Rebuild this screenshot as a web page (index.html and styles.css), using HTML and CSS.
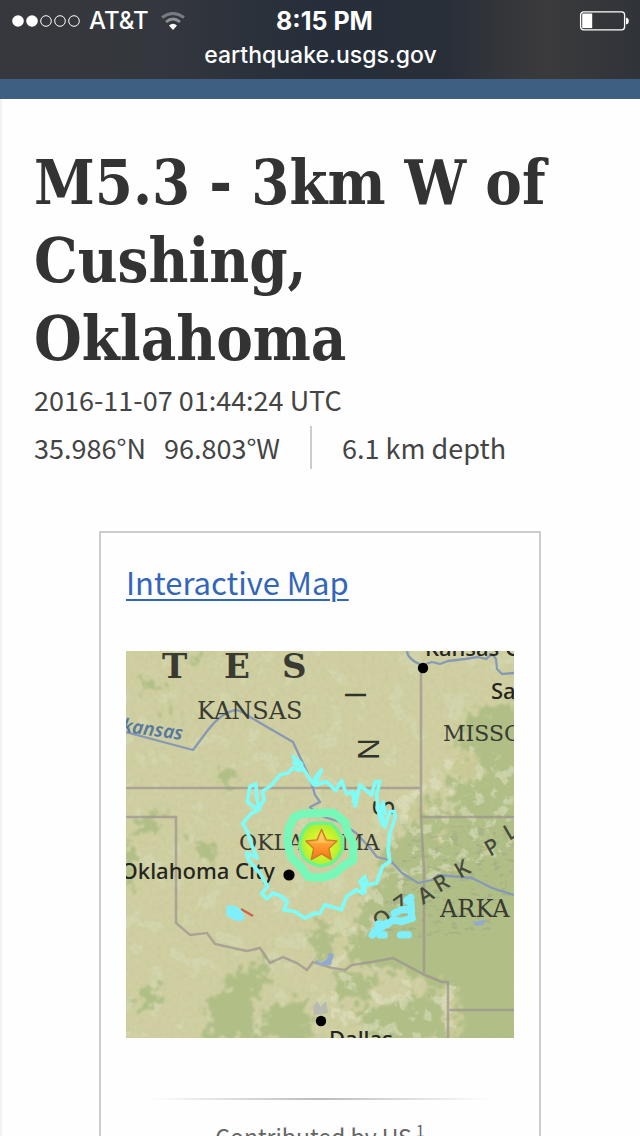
FILE: index.html
```html
<!DOCTYPE html>
<html lang="en">
<head>
    <meta charset="UTF-8">
    <meta name="viewport" content="width=device-width, initial-scale=1.0">
    <title>M5.3 - 3km W of Cushing, Oklahoma</title>
    <link rel="stylesheet" href="styles.css">
</head>
<body>
    <header class="browser-bar">
        <div class="status">
            <div class="carrier">
                <svg class="signal" viewBox="0 0 68 12" aria-hidden="true">
                    <circle cx="6" cy="6" r="5.8" fill="#fff"/>
                    <circle cx="20" cy="6" r="5.8" fill="#fff"/>
                    <g fill="none" stroke="#fff">
                        <circle cx="34" cy="6" r="5.3"/>
                        <circle cx="48" cy="6" r="5.3"/>
                        <circle cx="62" cy="6" r="5.3"/>
                    </g>
                </svg>
                <span>AT&amp;T</span>
                <svg class="wifi" viewBox="0 0 24 18" aria-hidden="true">
                    <path d="M1 5.500Q12 -2.500 23 5.500" fill="none" stroke="#777b81" stroke-width="2.800"/>
                    <path d="M5 10Q12 4 19 10" fill="none" stroke="#8d9096" stroke-width="2.800"/>
                    <path d="M8 13.500Q12 10 16 13.500L12 18Z" fill="#fff"/>
                </svg>
            </div>
            <span class="clock">8:15 PM</span>
            <svg class="battery" viewBox="0 0 50 20" aria-hidden="true">
                <rect x="1.600" y=".8" width="44" height="18" rx="3" fill="none" stroke="#fff" stroke-width="1.300"/>
                <rect x="3.200" y="2.500" width="10" height="14.600" fill="#fff"/>
                <path d="M47 6.500Q49.800 7 49.800 10T47 13.500Z" fill="#fff"/>
            </svg>
        </div>
        <div class="address">earthquake.usgs.gov</div>
    </header>
    <div class="site-banner"></div>

    <main class="event">
        <h1 class="event-title">M5.3 - 3km W of Cushing, Oklahoma</h1>
        <p class="event-time">2016-11-07 01:44:24 UTC</p>
        <div class="event-details">
            <span class="location"><span>35.986°N</span><span>96.803°W</span></span>
            <span class="depth">6.1 km depth</span>
        </div>

        <section class="card">
            <a class="card-link" href="#map">Interactive Map</a>
            <svg class="map" id="map" viewBox="0 0 388 387" role="img" aria-label="Shaking intensity map">
                <defs>
                    <filter id="rough" x="-10%" y="-10%" width="120%" height="120%">
                        <feTurbulence type="fractalNoise" baseFrequency=".11" numOctaves="5" seed="8"/>
                        <feDisplacementMap in="SourceGraphic" scale="36" xChannelSelector="R" yChannelSelector="G"/>
                        <feGaussianBlur stdDeviation=".8"/>
                    </filter>
                    <filter id="grain" x="0" y="0" width="100%" height="100%">
                        <feTurbulence type="fractalNoise" baseFrequency=".22" numOctaves="3" seed="4"/>
                        <feColorMatrix values="0 0 0 0 .48  0 0 0 0 .5  0 0 0 0 .28  0 0 0 1.200 -.48"/>
                    </filter>
                    <filter id="speckle" x="0" y="0" width="100%" height="100%">
                        <feTurbulence type="fractalNoise" baseFrequency=".05" numOctaves="4" seed="21"/>
                        <feColorMatrix values="0 0 0 0 .69  0 0 0 0 .75  0 0 0 0 .51  0 9 0 0 -5.400"/>
                    </filter>
                    <filter id="clearing" x="0" y="0" width="100%" height="100%">
                        <feTurbulence type="fractalNoise" baseFrequency=".07" numOctaves="4" seed="33"/>
                        <feColorMatrix values="0 0 0 0 .79  0 0 0 0 .79  0 0 0 0 .59  0 9 0 0 -4.900" result="n"/>
                        <feComposite in="n" in2="SourceGraphic" operator="in"/>
                    </filter>
                    <filter id="hills" x="0" y="0" width="100%" height="100%">
                        <feTurbulence type="fractalNoise" baseFrequency=".12 .26" numOctaves="3" seed="13"/>
                        <feColorMatrix values="0 0 0 0 .34  0 0 0 0 .4  0 0 0 0 .24  0 7 0 0 -3.900" result="n"/>
                        <feComposite in="n" in2="SourceGraphic" operator="in"/>
                    </filter>
                    <linearGradient id="starFill" x2="0" y2="1">
                        <stop offset="0" stop-color="#ffc04a"/>
                        <stop offset=".5" stop-color="#ffa033"/>
                        <stop offset="1" stop-color="#fb6e18"/>
                    </linearGradient>
                    <radialGradient id="shake">
                        <stop offset=".5" stop-color="#d8f32a"/>
                        <stop offset="1" stop-color="#a6ef35"/>
                    </radialGradient>
                </defs>

                <rect width="388" height="387" fill="#d0cfa2"/>

                <!-- vegetation -->
                <rect width="388" height="387" filter="url(#speckle)" opacity=".4"/>
                <g fill="#b0bf86" filter="url(#rough)">
                    <path d="M345 62L410 45V200H285L305 175L330 160L322 130L342 120L330 90Z"/>
                    <path d="M278 180L300 140L325 168L400 160V400H335L325 345L275 318L222 314L225 280L240 245L262 222L250 205Z"/>
                    <path d="M85 350L105 325L145 305L140 330L125 350L130 387H80Z"/>
                    <path d="M210 320L250 325L245 348L215 352ZM230 362L310 340L330 390H245ZM140 360L175 345L190 390H130Z"/>
                    <path d="M12 28L34 32L36 42L14 38ZM40 53L50 52L50 68L36 66ZM93 118L110 124L104 140L92 132Z"/>
                    <path d="M8 168L36 158L32 180L8 186ZM64 190L92 196L88 206L64 202ZM60 0L82 4L70 14ZM15 340L33 335L30 360L12 358Z"/>
                    <path d="M182 280L200 270L210 310L188 302ZM0 190L12 198L6 245L0 240Z"/>
                </g>
                <g fill="#cbcb98" filter="url(#rough)">
                    <path d="M335 95L352 106L357 130L335 128L324 117ZM322 325L335 350L336 387H326L318 345Z"/>
                    <path d="M288 148L304 150L302 164L286 174ZM315 180L325 178L324 188L314 190Z"/>
                </g>
                <path d="M270 150L340 90L388 110V200L300 230L235 300L205 320L330 335V387H205V300L250 230Z" filter="url(#clearing)" opacity=".5"/>
                <path d="M282 190L320 175H388V240L360 285H305L270 290L245 273L270 235Z" filter="url(#hills)" opacity=".6"/>
                <rect width="388" height="387" filter="url(#grain)" opacity=".45"/>

                <!-- state lines -->
                <path d="M0 137H294M295 20V167L298 220V322M295 166H388M0 166H50V272L64 284L81 282L89 293L107 297L121 300L134 297L144 312L157 306L171 312L181 319L187 311L206 317L219 319L226 314L246 311L267 307L299 324L316 331H322V387M321 359H388" fill="none" stroke="#9a928f" stroke-width="2.500" opacity=".7"/>
                <!-- rivers and lakes -->
                <g fill="none" stroke="#8799b5" stroke-width="2.300" stroke-linejoin="round">
                    <path d="M0 81L67 99L82 79Q97 60 111 59Q119 62 124 66L167 91L181 121L187 137L189 144L194 151L184 156L192 164L214 171L230 182L244 197L251 206L264 209L276 222L292 232L306 229L312 224L346 227L366 237L388 244"/>
                    <path d="M281 0Q282 9 296 14L306 11L314 13L322 10L339 8L352 6L360 8L366 3L370 8L371 18L376 23L388 22"/>
                </g>
                <path d="M188 307L195 312L201 308L203 302L208 303L205 314L192 314ZM346 269L350 271L360 268L357 274L350 275Z" fill="#91abd0"/>
                <path d="M187 356L191 350L195 356L200 350L202 362L188 364Z" fill="#b3b4b4" opacity=".8"/>

                <!-- place names -->
                <g class="region">
                    <text x="36" y="27" class="country">T</text>
                    <text x="98" y="27" class="country">E</text>
                    <text x="156" y="27" class="country">S</text>
                    <text x="71" y="68" class="state-wide">KANSAS</text>
                    <text x="317" y="90">MISSOURI</text>
                    <text x="113" y="199">OKLAHOMA</text>
                    <text x="314" y="266" class="state-wide">ARKA</text>
                </g>
                <g class="terrain">
                    <text transform="translate(219 44) rotate(90)" text-anchor="middle" class="plains">I</text>
                    <text transform="translate(232 98) rotate(90)" text-anchor="middle" class="plains">N</text>
                    <text transform="translate(247 157) rotate(90)" text-anchor="middle" class="plains">S</text>
                    <text transform="translate(254 279) rotate(-38)">O</text>
                    <text transform="translate(275 262) rotate(-36)">Z</text>
                    <text transform="translate(297 254) rotate(-30)">A</text>
                    <text transform="translate(313 242) rotate(-30)">R</text>
                    <text transform="translate(334 228) rotate(-30)">K</text>
                    <text transform="translate(364 206) rotate(-30)">P</text>
                    <text transform="translate(383 190) rotate(-30)">L</text>
                </g>
                <text class="river" text-anchor="end" transform="translate(56 89) rotate(8)">Arkansas</text>
                <g class="city">
                    <text x="149" y="228" text-anchor="end">Oklahoma City</text>
                    <text x="203" y="396">Dallas</text>
                    <text x="299" y="5">Kansas City</text>
                    <text x="365" y="48">Saint Louis</text>
                </g>
                <circle cx="297" cy="17" r="5.200"/>
                <circle cx="163" cy="224" r="5.600"/>
                <circle cx="195" cy="370" r="5.200"/>

                <!-- intensity contours -->
                <path d="M115 258L127 265" stroke="#cc654d" stroke-width="2.500"/>
                <path d="M102 256L106 256L110 257L115 261L117 267L114 269L108 267L102 264Z" fill="#7eeffb" stroke="#7eeffb" stroke-width="3" stroke-linejoin="round"/>
                <g transform="translate(189 189) scale(.333)" fill="none" stroke="#7eeffb" stroke-linecap="round" stroke-linejoin="round">
                    <path d="M172 285L195 255M190 252L215 255L235 240L260 245L292 235M238 220L258 210L288 208M180 278L215 250" stroke-width="22"/>
                    <path d="M288 172L276 182L288 188L290 235M195 285H208M257 285H280" stroke-width="22"/>
                </g>
                <g transform="translate(104 99) scale(.333)" stroke-linejoin="round">
                    <path d="M190 20L215 42L210 61L188 54L175 68L150 75L125 105L97 125L103 150L82 180L52 155L60 110L78 102L80 140L88 180L65 190L38 220L52 245L65 285L82 325L50 308L55 330L90 370L113 410L95 430L110 447L130 430L150 437L172 455L162 480L195 485L225 505L250 492L270 490L285 465L335 480L350 440L380 420L398 430L405 415L390 395L405 380L412 405L440 400L458 350L480 335L475 300L480 250L497 200L493 185L480 185L465 232L448 190L460 157L466 190L445 175L440 135L450 95L436 95L425 135L390 105L376 168L368 125L350 132L335 92L318 122L290 95L255 105L275 60L258 80L250 103L235 80L213 45Z" fill="none" stroke="#7ffbf8" stroke-width="11"/>
                    <path d="M445 170L462 227M372 125L377 160M400 395L402 433M192 32L205 48" fill="none" stroke="#7ffbf8" stroke-width="17"/>
                    <path d="M192 203L215 192L250 190L310 188L346 217L354 250L370 280V330L338 350L315 371L280 383L235 382L212 350L184 322L173 280L176 236Z" fill="none" stroke="#78f8b8" stroke-width="25"/>
                    <path d="M195 330L225 345L238 370L205 360Z" fill="#78f8b8"/>
                    <path d="M240 222L272 219L304 221L322 240L336 264L338 298L322 325L302 342L270 349L240 338L221 322L209 290L212 262L222 240Z" fill="url(#shake)" stroke="#6df290" stroke-width="10"/>
                    <path d="M275 238L289 270L321 273L297 296L304 329L275 312L244 329L251 296L228 273L261 270Z" fill="url(#starFill)" stroke="#c97d2c" stroke-width="4"/>
                    <path d="M275 246L285 275L311 278L240 279L264 275Z" fill="#ffd873" opacity=".65"/>
                </g>
            </svg>
            <hr class="divider">
            <p class="credit">Contributed by US<sup>1</sup></p>
        </section>
    </main>
</body>
</html>
```

FILE: styles.css
```css
*, *::before, *::after {
    box-sizing: border-box;
    margin: 0;
    padding: 0;
}
body {
    height: 100vh;
    overflow: hidden;
    background-color: #fefefe;
    color: #444;
    font-family: "Noto Sans CJK SC", "Noto Sans", sans-serif;
    font-size: 27px;
}
.browser-bar {
    height: 79px;
    padding: 6px 11px 0 12px;
    background: linear-gradient(90deg, #36383d 0%, #34373d 25%, #252e3a 50%, #292f38 70%, #3b3b3c 85%, #303339 100%);
    color: #fff;
    font-family: Inter, "Liberation Sans", sans-serif;
    font-size: 24px;
    font-weight: 500;
    line-height: 30px;
}
.status {
    display: grid;
    grid-template-columns: 1fr auto 1fr;
    align-items: center;
}
.carrier {
    display: flex;
    align-items: center;
    gap: 9px;
}
.signal {
    width: 68px;
    height: 12px;
}
.wifi {
    width: 24px;
    height: 18px;
    margin-left: 3px;
}
.clock {
    padding-left: 8px;
    font-size: 25px;
    font-weight: 700;
}
.battery {
    width: 50px;
    height: 20px;
    justify-self: end;
}
.address {
    margin-top: 4px;
    font-size: 23px;
    text-align: center;
}
.site-banner {
    height: 20px;
    background-color: #3f5f82;
}
.event {
    padding: 45px 32px 0 32px;
    border-left: 2px solid #f3f3f3;
}
.event-title {
    color: #333;
    font-family: "DejaVu Serif Condensed", "DejaVu Serif", serif;
    font-size: 61px;
    font-weight: 700;
    line-height: 78px;
}
.event-time {
    line-height: 43px;
}
.event-details {
    display: flex;
    margin-top: 5px;
    line-height: 43px;
}
.location {
    display: flex;
    gap: 18px;
    padding-right: 30px;
}
.depth {
    padding-left: 30px;
    border-left: 2px solid #ccc;
}
.card {
    margin: 62px 67px 0 65px;
    padding: 25px;
    border: 2px solid #ccc;
}
.card-link {
    display: block;
    color: #3366bb;
    font-size: 31px;
    line-height: 48px;
    text-decoration-thickness: 2px;
    text-underline-offset: 4px;
}
.map {
    display: block;
    width: 100%;
    margin-top: 45px;
}
.region {
    fill: #393a32;
    font-family: "DejaVu Serif", serif;
    font-size: 22px;
}
.state-wide {
    font-size: 24px;
}
.country {
    font-size: 34px;
    font-weight: 700;
}
.terrain {
    fill: #44483a;
    font-family: "Noto Sans", sans-serif;
    font-size: 22px;
    font-weight: 500;
}
.plains {
    fill: #30332c;
    font-family: "Open Sans", sans-serif;
    font-size: 30px;
}
.river {
    fill: #5578a0;
    font-family: "Noto Sans", sans-serif;
    font-size: 19px;
    font-style: italic;
    font-weight: 600;
}
.city {
    fill: #24251e;
    font-family: "Noto Sans", sans-serif;
    font-size: 22px;
    font-weight: 500;
}
.divider {
    height: 2px;
    margin: 60px 24px 0;
    border: 0;
    background: linear-gradient(90deg, transparent, #bbb, transparent);
}
.credit {
    margin-top: 16px;
    color: #666;
    font-size: 23px;
    line-height: 40px;
    text-align: center;
}
.credit sup {
    margin-left: 4px;
    font-size: 16px;
    line-height: 0;
}
```
